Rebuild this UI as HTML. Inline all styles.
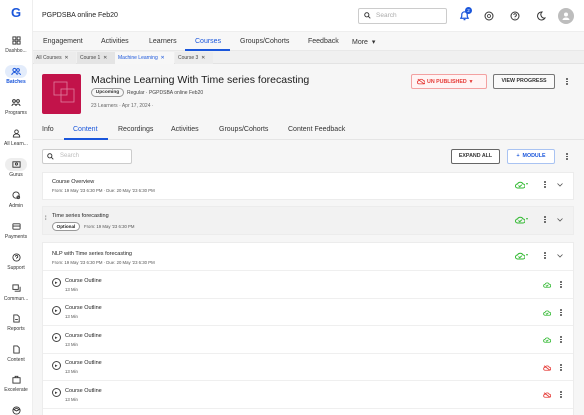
<!DOCTYPE html>
<html style="width:584px;height:415px;overflow:hidden"><head><meta charset="utf-8"><style>
*{box-sizing:border-box;margin:0;padding:0}
body{width:584px;height:415px;overflow:hidden;font-family:"Liberation Sans",sans-serif;background:#f6f6f6;position:relative;color:#222}
.a{position:absolute}
.sb{left:0;top:0;width:33px;height:415px;background:#fff;border-right:1px solid #eee}
.si{position:absolute;left:0;width:32px;text-align:center;font-size:5px;color:#333}
.si svg{display:block;margin:0 auto 3px}
.t{font-size:7px;color:#333;position:absolute}
.card{position:absolute;left:42px;width:532px;background:#fff;border:1px solid #ececec}
.ct{font-size:5.5px;color:#222;position:absolute}
.cs{font-size:4.3px;color:#555;position:absolute}
.row{position:absolute;left:0;width:530px;height:28px;border-top:1px solid #efefef}
.dots{position:absolute;width:2px}
.dots i{display:block;width:1.5px;height:1.5px;background:#444;margin-bottom:1.2px;border-radius:1px}
</style></head><body>
<div class="a" style="left:33px;top:0;width:551px;height:32px;background:#fff;border-bottom:1px solid #eee"></div>
<div class="t" style="left:42px;top:12px;font-size:7px;color:#222">PGPDSBA online Feb20</div>
<div class="a" style="left:358px;top:8px;width:89px;height:16px;border:1px solid #ccc;border-radius:2px;background:#fff"></div>
<svg class="a" style="left:364px;top:12px" width="7" height="7" viewBox="0 0 10 10"><circle cx="4" cy="4" r="3" fill="none" stroke="#333" stroke-width="1.3"/><path d="M6.2 6.2L9 9" stroke="#333" stroke-width="1.3"/></svg>
<div class="t" style="left:376px;top:12px;font-size:6.5px;color:#aaa">Search</div>
<svg class="a" style="left:459px;top:10px" width="11" height="11" viewBox="0 0 12 12"><path d="M2 9h8l-1-2V5a3 3 0 0 0-6 0v2z M5 10.5h2" fill="none" stroke="#1a56db" stroke-width="1.3"/></svg>
<div class="a" style="left:465px;top:7px;width:7px;height:7px;border-radius:50%;background:#1a56db;color:#fff;font-size:4.5px;text-align:center;line-height:7px">2</div>
<svg class="a" style="left:484px;top:11px" width="10" height="10" viewBox="0 0 10 10"><circle cx="5" cy="5" r="4" fill="none" stroke="#333" stroke-width="1"/><circle cx="5" cy="5" r="1.5" fill="none" stroke="#333" stroke-width=".8"/></svg>
<svg class="a" style="left:510px;top:11px" width="10" height="10" viewBox="0 0 10 10"><circle cx="5" cy="5" r="4" fill="none" stroke="#333" stroke-width="1"/><path d="M3.8 4a1.3 1.3 0 1 1 1.5 1.3c-.3.1-.3.4-.3.9M5 7.3v.3" fill="none" stroke="#333" stroke-width=".9"/></svg>
<svg class="a" style="left:536px;top:11px" width="10" height="10" viewBox="0 0 10 10"><path d="M6 1a4 4 0 1 0 3 6A3.5 3.5 0 0 1 6 1z" fill="none" stroke="#333" stroke-width="1"/></svg>
<div class="a" style="left:558px;top:8px;width:16px;height:16px;border-radius:50%;background:#bdbdbd"></div>
<svg class="a" style="left:561px;top:11px" width="10" height="10" viewBox="0 0 10 10"><circle cx="5" cy="3.5" r="2" fill="#fff"/><path d="M1.5 9a3.5 2.5 0 0 1 7 0z" fill="#fff"/></svg>
<div class="a" style="left:33px;top:32px;width:551px;height:19px;background:#f7f7f7;border-bottom:1px solid #e8e8e8"></div>
<div class="t" style="left:43px;top:38px">Engagement</div>
<div class="t" style="left:101px;top:38px">Activities</div>
<div class="t" style="left:149px;top:38px">Learners</div>
<div class="t" style="left:195px;top:38px;color:#1a56db">Courses</div>
<div class="a" style="left:185px;top:49px;width:45px;height:2px;background:#1a56db"></div>
<div class="t" style="left:240px;top:38px">Groups/Cohorts</div>
<div class="t" style="left:308px;top:38px">Feedback</div>
<div class="t" style="left:352px;top:38px">More &nbsp;▾</div>
<div class="a" style="left:33px;top:51px;width:551px;height:13px;background:#f0f0f0;border-bottom:1px solid #e3e3e3"></div>
<div class="a" style="left:34px;top:52px;width:42px;height:12px;background:#ececec"></div>
<div class="t" style="left:36px;top:55px;font-size:5px;color:#444">All Courses &nbsp;✕</div>
<div class="a" style="left:77px;top:52px;width:38px;height:12px;background:#e4e4e4"></div>
<div class="t" style="left:80px;top:55px;font-size:5px;color:#444">Course 1 &nbsp;✕</div>
<div class="a" style="left:115px;top:52px;width:59px;height:12px;background:#f7f7f7"></div>
<div class="t" style="left:118px;top:55px;font-size:5px;color:#1a56db">Machine Learning &nbsp;✕</div>
<div class="a" style="left:175px;top:52px;width:38px;height:12px;background:#ececec"></div>
<div class="t" style="left:178px;top:55px;font-size:5px;color:#444">Course 3 &nbsp;✕</div>
<div class="a" style="left:42px;top:74px;width:39px;height:40px;background:#c2134a;border-radius:2px"></div>
<svg class="a" style="left:52px;top:80px" width="24" height="24" viewBox="0 0 24 24"><rect x="2" y="2" width="13" height="13" fill="none" stroke="#e0809e" stroke-width=".8"/><rect x="9" y="9" width="13" height="13" fill="none" stroke="#e0809e" stroke-width=".8"/></svg>
<div class="t" style="left:91px;top:74px;font-size:10.5px;color:#1a1a1a">Machine Learning With Time series forecasting</div>
<div class="a" style="left:91px;top:88px;width:33px;height:9px;border:1px solid #999;border-radius:5px;font-size:4.8px;text-align:center;line-height:7px;color:#333;font-weight:bold">Upcoming</div>
<div class="t" style="left:127px;top:90px;font-size:5px;color:#444">Regular · PGPDSBA online Feb20</div>
<div class="t" style="left:91px;top:103px;font-size:5px;color:#666">23 Learners · Apr 17, 2024 ·</div>
<div class="a" style="left:411px;top:74px;width:76px;height:15px;border:1px solid #f3a1a1;border-radius:2px;background:#fff4f4"></div>
<svg class="a" style="left:417px;top:78px" width="8" height="7" viewBox="0 0 10 8"><path d="M2.5 7h5.5a2 2 0 0 0 0-4 3 3 0 0 0-5.5 0 2 2 0 0 0 0 4zM1 1l8 6" fill="none" stroke="#e53935" stroke-width="1"/></svg>
<div class="t" style="left:427px;top:78.5px;font-size:5.3px;color:#e53935;font-weight:bold">UN PUBLISHED &nbsp;▾</div>
<div class="a" style="left:493px;top:74px;width:62px;height:15px;border:1px solid #777;border-radius:2px;background:#fafafa;font-size:5.3px;font-weight:bold;text-align:center;line-height:13px;color:#333">VIEW PROGRESS</div>
<div class="dots" style="left:566px;top:78px"><i></i><i></i><i></i></div>
<div class="a" style="left:33px;top:139px;width:551px;height:1px;background:#e5e5e5"></div>
<div class="t" style="left:42px;top:126px">Info</div>
<div class="t" style="left:73px;top:126px;color:#1a56db">Content</div>
<div class="a" style="left:64px;top:138px;width:44px;height:2px;background:#1a56db"></div>
<div class="t" style="left:118px;top:126px">Recordings</div>
<div class="t" style="left:171px;top:126px">Activities</div>
<div class="t" style="left:219px;top:126px">Groups/Cohorts</div>
<div class="t" style="left:288px;top:126px">Content Feedback</div>
<div class="a" style="left:42px;top:149px;width:90px;height:15px;border:1px solid #ccc;border-radius:2px;background:#fff"></div>
<svg class="a" style="left:47px;top:153px" width="7" height="7" viewBox="0 0 10 10"><circle cx="4" cy="4" r="3" fill="none" stroke="#333" stroke-width="1.3"/><path d="M6.2 6.2L9 9" stroke="#333" stroke-width="1.3"/></svg>
<div class="t" style="left:60px;top:153px;font-size:6px;color:#bbb">Search</div>
<div class="a" style="left:451px;top:149px;width:49px;height:15px;border:1px solid #666;border-radius:2px;background:#fff;font-size:5.3px;font-weight:bold;text-align:center;line-height:13px;color:#333">EXPAND ALL</div>
<div class="a" style="left:507px;top:149px;width:48px;height:15px;border:1px solid #a9c3f2;border-radius:2px;background:#fff;font-size:5.3px;font-weight:bold;text-align:center;line-height:13px;color:#1a56db">+ &nbsp;MODULE</div>
<div class="dots" style="left:566px;top:153px"><i></i><i></i><i></i></div>
<div class="card" style="top:172px;height:28px">
 <div class="ct" style="left:9px;top:6px">Course Overview</div>
 <div class="cs" style="left:9px;top:15px">From: 19 May '23 6:30 PM · Due: 20 May '23 6:30 PM</div>
</div>
<div class="card" style="top:206px;height:29px;background:#f2f2f2">
 <div class="t" style="left:2px;top:9px;font-size:6px">⁞</div>
 <div class="ct" style="left:9px;top:6px">Time series forecasting</div>
 <div class="a" style="left:9px;top:15px;width:28px;height:9px;border:1px solid #999;border-radius:5px;background:#fff;font-size:4.6px;text-align:center;line-height:7px;font-weight:bold">Optional</div>
 <div class="cs" style="left:41px;top:17px">From: 19 May '23 6:30 PM</div>
</div>
<div class="card" style="top:242px;height:173px;border-bottom:none">
 <div class="ct" style="left:9px;top:8px">NLP with Time series forecasting</div>
 <div class="cs" style="left:9px;top:17px">From: 19 May '23 6:30 PM · Due: 20 May '23 6:30 PM</div>
 <div class="row" style="top:27px"></div><div class="row" style="top:55px"></div><div class="row" style="top:82px"></div><div class="row" style="top:110px"></div><div class="row" style="top:137px;height:28px"></div><div class="row" style="top:165px;height:6px"></div>
</div>
<svg class="a" style="left:515px;top:181px" width="10" height="8" viewBox="0 0 10 8"><path d="M2.5 7h5.5a2 2 0 0 0 0-4 3 3 0 0 0-5.5 0 2 2 0 0 0 0 4zM3.5 4.5l1.3 1.2 2-2" fill="none" stroke="#2eb82e" stroke-width="1"/></svg><div class="t" style="left:526px;top:181px;font-size:4px;color:#2eb82e">▾</div>
<svg class="a" style="left:515px;top:216px" width="10" height="8" viewBox="0 0 10 8"><path d="M2.5 7h5.5a2 2 0 0 0 0-4 3 3 0 0 0-5.5 0 2 2 0 0 0 0 4zM3.5 4.5l1.3 1.2 2-2" fill="none" stroke="#2eb82e" stroke-width="1"/></svg><div class="t" style="left:526px;top:216px;font-size:4px;color:#2eb82e">▾</div>
<svg class="a" style="left:515px;top:252px" width="10" height="8" viewBox="0 0 10 8"><path d="M2.5 7h5.5a2 2 0 0 0 0-4 3 3 0 0 0-5.5 0 2 2 0 0 0 0 4zM3.5 4.5l1.3 1.2 2-2" fill="none" stroke="#2eb82e" stroke-width="1"/></svg><div class="t" style="left:526px;top:252px;font-size:4px;color:#2eb82e">▾</div>
<div class="dots" style="left:544px;top:181px"><i></i><i></i><i></i></div>
<div class="dots" style="left:544px;top:216px"><i></i><i></i><i></i></div>
<div class="dots" style="left:544px;top:252px"><i></i><i></i><i></i></div>
<svg class="a" style="left:557px;top:183px" width="6" height="4" viewBox="0 0 6 4"><path d="M.5.5L3 3 5.5.5" fill="none" stroke="#555" stroke-width=".8"/></svg>
<svg class="a" style="left:557px;top:218px" width="6" height="4" viewBox="0 0 6 4"><path d="M.5.5L3 3 5.5.5" fill="none" stroke="#555" stroke-width=".8"/></svg>
<svg class="a" style="left:557px;top:254px" width="6" height="4" viewBox="0 0 6 4"><path d="M.5.5L3 3 5.5.5" fill="none" stroke="#555" stroke-width=".8"/></svg>
<div class="a" style="left:52px;top:278px;width:9px;height:9px;border:1px solid #444;border-radius:50%"></div><div class="t" style="left:55px;top:279.5px;font-size:5px">▸</div>
<div class="ct" style="left:65px;top:278px;font-size:5.5px">Course Outline</div><div class="cs" style="left:65px;top:287px">13 Min</div>
<div class="a" style="left:52px;top:306px;width:9px;height:9px;border:1px solid #444;border-radius:50%"></div><div class="t" style="left:55px;top:307.5px;font-size:5px">▸</div>
<div class="ct" style="left:65px;top:305px;font-size:5.5px">Course Outline</div><div class="cs" style="left:65px;top:314px">13 Min</div>
<div class="a" style="left:52px;top:333px;width:9px;height:9px;border:1px solid #444;border-radius:50%"></div><div class="t" style="left:55px;top:334.5px;font-size:5px">▸</div>
<div class="ct" style="left:65px;top:333px;font-size:5.5px">Course Outline</div><div class="cs" style="left:65px;top:342px">13 Min</div>
<div class="a" style="left:52px;top:361px;width:9px;height:9px;border:1px solid #444;border-radius:50%"></div><div class="t" style="left:55px;top:362.5px;font-size:5px">▸</div>
<div class="ct" style="left:65px;top:360px;font-size:5.5px">Course Outline</div><div class="cs" style="left:65px;top:369px">13 Min</div>
<div class="a" style="left:52px;top:388px;width:9px;height:9px;border:1px solid #444;border-radius:50%"></div><div class="t" style="left:55px;top:389.5px;font-size:5px">▸</div>
<div class="ct" style="left:65px;top:388px;font-size:5.5px">Course Outline</div><div class="cs" style="left:65px;top:397px">13 Min</div>
<svg class="a" style="left:543px;top:282px" width="8" height="6" viewBox="0 0 10 8"><path d="M2.5 7h5.5a2 2 0 0 0 0-4 3 3 0 0 0-5.5 0 2 2 0 0 0 0 4zM3.5 4.5l1.3 1.2 2-2" fill="none" stroke="#2eb82e" stroke-width="1.1"/></svg>
<svg class="a" style="left:543px;top:310px" width="8" height="6" viewBox="0 0 10 8"><path d="M2.5 7h5.5a2 2 0 0 0 0-4 3 3 0 0 0-5.5 0 2 2 0 0 0 0 4zM3.5 4.5l1.3 1.2 2-2" fill="none" stroke="#2eb82e" stroke-width="1.1"/></svg>
<svg class="a" style="left:543px;top:337px" width="8" height="6" viewBox="0 0 10 8"><path d="M2.5 7h5.5a2 2 0 0 0 0-4 3 3 0 0 0-5.5 0 2 2 0 0 0 0 4zM3.5 4.5l1.3 1.2 2-2" fill="none" stroke="#2eb82e" stroke-width="1.1"/></svg>
<svg class="a" style="left:543px;top:365px" width="8" height="6" viewBox="0 0 10 8"><path d="M2.5 7h5.5a2 2 0 0 0 0-4 3 3 0 0 0-5.5 0 2 2 0 0 0 0 4zM1 1l8 6" fill="none" stroke="#e53935" stroke-width="1.1"/></svg>
<svg class="a" style="left:543px;top:392px" width="8" height="6" viewBox="0 0 10 8"><path d="M2.5 7h5.5a2 2 0 0 0 0-4 3 3 0 0 0-5.5 0 2 2 0 0 0 0 4zM1 1l8 6" fill="none" stroke="#e53935" stroke-width="1.1"/></svg>
<div class="dots" style="left:560px;top:281px"><i></i><i></i><i></i></div>
<div class="dots" style="left:560px;top:309px"><i></i><i></i><i></i></div>
<div class="dots" style="left:560px;top:336px"><i></i><i></i><i></i></div>
<div class="dots" style="left:560px;top:364px"><i></i><i></i><i></i></div>
<div class="dots" style="left:560px;top:391px"><i></i><i></i><i></i></div>
<div class="a sb"></div>
<div class="a" style="left:11px;top:5px;font-size:13px;font-weight:bold;color:#1a56db">G</div>
<div class="si" style="top:36px"><svg width="9" height="9" viewBox="0 0 10 10" fill="none" stroke="#333" stroke-width="1"><rect x="1" y="1" width="3.3" height="3.3"/><rect x="5.7" y="1" width="3.3" height="3.3"/><rect x="1" y="5.7" width="3.3" height="3.3"/><rect x="5.7" y="5.7" width="3.3" height="3.3"/></svg>Dashbo...</div>
<div class="a" style="left:5px;top:65px;width:22px;height:13px;border-radius:7px;background:#e3ecfb"></div>
<div class="si" style="top:67px;color:#1a56db;font-weight:bold"><svg width="10" height="9" viewBox="0 0 10 9" fill="none" stroke="#1a56db" stroke-width="1"><circle cx="3.5" cy="3" r="1.6"/><circle cx="7" cy="3" r="1.4"/><path d="M.8 8a2.7 2.5 0 0 1 5.4 0M6 6a2.5 2 0 0 1 3.4 2"/></svg>Batches</div>
<div class="si" style="top:98px"><svg width="10" height="9" viewBox="0 0 10 9" fill="none" stroke="#333" stroke-width="1"><circle cx="3" cy="3" r="1.4"/><circle cx="7" cy="3" r="1.4"/><path d="M1 8a2 2 0 0 1 4 0M5 8a2 2 0 0 1 4 0"/></svg>Programs</div>
<div class="si" style="top:129px"><svg width="9" height="9" viewBox="0 0 10 10" fill="none" stroke="#333" stroke-width="1"><circle cx="5" cy="3" r="2"/><path d="M1.5 9V8a3.5 2.5 0 0 1 7 0v1z"/></svg>All Learn...</div>
<div class="a" style="left:5px;top:158px;width:22px;height:13px;border-radius:7px;background:#eee"></div>
<div class="si" style="top:160px"><svg width="9" height="9" viewBox="0 0 10 10" fill="none" stroke="#333" stroke-width="1"><rect x="1" y="2" width="8" height="6"/><circle cx="5" cy="4.5" r="1.2"/></svg>Gurus</div>
<div class="si" style="top:191px"><svg width="9" height="9" viewBox="0 0 10 10" fill="none" stroke="#333" stroke-width="1"><circle cx="4.5" cy="4.5" r="3.5"/><circle cx="7" cy="7" r="1.5"/></svg>Admin</div>
<div class="si" style="top:222px"><svg width="9" height="9" viewBox="0 0 10 10" fill="none" stroke="#333" stroke-width="1"><rect x="1" y="2" width="8" height="6" rx=".5"/><path d="M1 4.5h8"/></svg>Payments</div>
<div class="si" style="top:253px"><svg width="9" height="9" viewBox="0 0 10 10" fill="none" stroke="#333" stroke-width="1"><circle cx="5" cy="5" r="4"/><path d="M3.8 4a1.3 1.3 0 1 1 1.5 1.3c-.3.1-.3.4-.3.9"/></svg>Support</div>
<div class="si" style="top:284px"><svg width="9" height="9" viewBox="0 0 10 10" fill="none" stroke="#333" stroke-width="1"><rect x="1" y="1" width="6" height="5"/><path d="M3 8h6V3"/></svg>Commun...</div>
<div class="si" style="top:314px"><svg width="9" height="9" viewBox="0 0 10 10" fill="none" stroke="#333" stroke-width="1"><path d="M2 1h4l2 2v6H2z M3.5 6h3"/></svg>Reports</div>
<div class="si" style="top:345px"><svg width="9" height="9" viewBox="0 0 10 10" fill="none" stroke="#333" stroke-width="1"><path d="M2 1h4l2 2v6H2z"/></svg>Content</div>
<div class="si" style="top:375px"><svg width="9" height="9" viewBox="0 0 10 10" fill="none" stroke="#333" stroke-width="1"><rect x="1" y="3" width="8" height="6"/><path d="M3.5 3V1.5h3V3"/></svg>Excelerate</div>
<div class="a" style="left:0;top:404px;width:32px;height:11px;overflow:hidden"><svg style="display:block;margin:2px auto 0" width="9" height="9" viewBox="0 0 10 10" fill="none" stroke="#333" stroke-width="1"><circle cx="5" cy="5" r="4"/><path d="M2 4l3-1.5L8 4 5 5.5z"/></svg></div>
</body></html>
